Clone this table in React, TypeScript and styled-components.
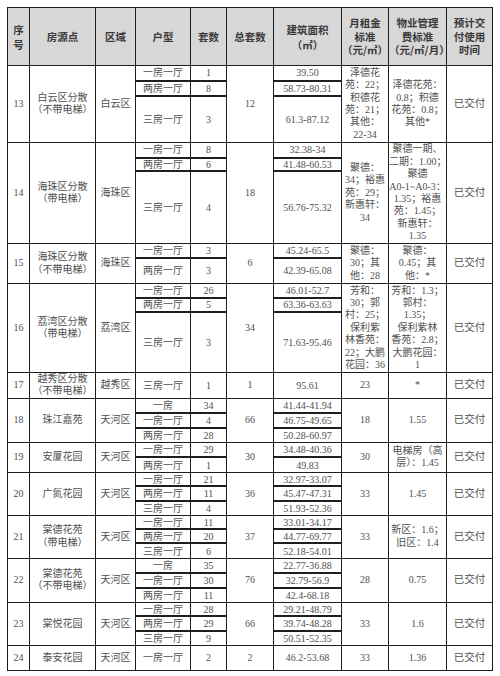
import styled, { createGlobalStyle } from "styled-components";

const GlobalStyle = createGlobalStyle`
  html, body {
    margin: 0;
    padding: 0;
    background: #ffffff;
  }
`;

const Page = styled.div`
  width: 500px;
  height: 676px;
  padding: 7px 0 0 7px;
  box-sizing: border-box;
  background: #fff;
`;

const Table = styled.table`
  border-collapse: collapse;
  table-layout: fixed;
  width: 485px;
  font-family: "Liberation Serif", "Noto Sans CJK SC", serif;
  font-size: 10px;
  color: #505050;
`;

const Head = styled.th<{ $lh: number }>`
  background: #d7d7d7;
  border: 1px solid #1e1e1e;
  height: 57px;
  padding: 0;
  font-family: "Noto Sans CJK SC", "Liberation Sans", sans-serif;
  font-weight: 700;
  font-size: 10.5px;
  line-height: ${(p) => p.$lh}px;
  color: #3a3a3a;
  text-align: center;
  vertical-align: middle;
`;

const Tr = styled.tr<{ $h: number }>`
  height: ${(p) => p.$h}px;
`;

const Cell = styled.td`
  border: 1px solid #1e1e1e;
  padding: 0;
  text-align: center;
  vertical-align: middle;
  white-space: nowrap;
  line-height: 12.4px;
`;

const SubCell = styled(Cell)<{ $split: boolean }>`
  border-top: ${(p) => (p.$split ? "2px solid #1e1e1e" : "1px solid #1e1e1e")};
  line-height: 11px;
`;

const Line = styled.div`
  white-space: nowrap;
`;

const Done = styled(Cell)`
  font-size: 10.5px;
`;

type Sub = { type: string; count: string; size: string; h: number };
type Row = {
  no: string;
  name: string[];
  area: string;
  subs: Sub[];
  total: string;
  rent: string[];
  fee: string[];
  time: string;
};

const widths = [22, 66, 40, 55, 36, 47, 68, 47, 58, 46];

const rows: Row[] = [
  {
    no: "13",
    name: ["白云区分散", "（不带电梯）"],
    area: "白云区",
    subs: [
      { type: "一房一厅", count: "1", size: "39.50", h: 15 },
      { type: "两房一厅", count: "8", size: "58.73-80.31", h: 15 },
      { type: "三房一厅", count: "3", size: "61.3-87.12", h: 47 },
    ],
    total: "12",
    rent: ["泽德花", "苑：22；", "积德花", "苑：21；", "其他：", "22-34"],
    fee: ["泽德花苑：", "0.8；积德", "花苑：0.8；", "其他*"],
    time: "已交付",
  },
  {
    no: "14",
    name: ["海珠区分散", "（带电梯）"],
    area: "海珠区",
    subs: [
      { type: "一房一厅", count: "8", size: "32.38-34", h: 15 },
      { type: "两房一厅", count: "6", size: "41.48-60.53", h: 12 },
      { type: "三房一厅", count: "4", size: "56.76-75.32", h: 73 },
    ],
    total: "18",
    rent: ["聚德：", "34；裕惠", "苑：29；", "新惠轩：", "34"],
    fee: [
      "聚德一期、",
      "二期：1.00；",
      "聚德",
      "A0-1~A0-3：",
      "1.35；裕惠",
      "苑：1.45；",
      "新惠轩：",
      "1.35",
    ],
    time: "已交付",
  },
  {
    no: "15",
    name: ["海珠区分散", "（不带电梯）"],
    area: "海珠区",
    subs: [
      { type: "一房一厅", count: "3", size: "45.24-65.5", h: 14 },
      { type: "两房一厅", count: "3", size: "42.39-65.08", h: 26 },
    ],
    total: "6",
    rent: ["聚德：", "30；其", "他：28"],
    fee: ["聚德：", "0.45；其", "他：*"],
    time: "已交付",
  },
  {
    no: "16",
    name: ["荔湾区分散", "（带电梯）"],
    area: "荔湾区",
    subs: [
      { type: "一房一厅", count: "26", size: "46.01-52.7", h: 14 },
      { type: "两房一厅", count: "5", size: "63.36-63.63", h: 14 },
      { type: "三房一厅", count: "3", size: "71.63-95.46", h: 61 },
    ],
    total: "34",
    rent: ["芳和：", "30；郭", "村：25；", "保利紫", "林香苑：", "22；大鹏", "花园：36"],
    fee: ["芳和：1.3；", "郭村：", "1.35；", "保利紫林", "香苑：2.8；", "大鹏花园：", "1"],
    time: "已交付",
  },
  {
    no: "17",
    name: ["越秀区分散", "（不带电梯）"],
    area: "越秀区",
    subs: [{ type: "三房一厅", count: "1", size: "95.61", h: 25 }],
    total: "1",
    rent: ["23"],
    fee: ["*"],
    time: "已交付",
  },
  {
    no: "18",
    name: ["珠江嘉苑"],
    area: "天河区",
    subs: [
      { type: "一房", count: "34", size: "41.44-41.94", h: 15 },
      { type: "一房一厅", count: "4", size: "46.75-49.65", h: 15 },
      { type: "两房一厅", count: "28", size: "50.28-60.97", h: 14 },
    ],
    total: "66",
    rent: ["18"],
    fee: ["1.55"],
    time: "已交付",
  },
  {
    no: "19",
    name: ["安厦花园"],
    area: "天河区",
    subs: [
      { type: "一房一厅", count: "29", size: "34.48-40.36", h: 15 },
      { type: "两房一厅", count: "1", size: "49.83", h: 15 },
    ],
    total: "30",
    rent: ["30"],
    fee: ["电梯房（高", "层）：1.45"],
    time: "已交付",
  },
  {
    no: "20",
    name: ["广氮花园"],
    area: "天河区",
    subs: [
      { type: "一房一厅", count: "21", size: "32.97-33.07", h: 14 },
      { type: "两房一厅", count: "11", size: "45.47-47.31", h: 15 },
      { type: "三房一厅", count: "4", size: "51.93-52.36", h: 14 },
    ],
    total: "36",
    rent: ["33"],
    fee: ["1.45"],
    time: "已交付",
  },
  {
    no: "21",
    name: ["棠德花苑", "（带电梯）"],
    area: "天河区",
    subs: [
      { type: "一房一厅", count: "11", size: "33.01-34.17", h: 14 },
      { type: "两房一厅", count: "20", size: "44.77-69.77", h: 14 },
      { type: "三房一厅", count: "6", size: "52.18-54.01", h: 15 },
    ],
    total: "37",
    rent: ["33"],
    fee: ["新区：1.6；", "旧区：1.4"],
    time: "已交付",
  },
  {
    no: "22",
    name: ["棠德花苑", "（不带电梯）"],
    area: "天河区",
    subs: [
      { type: "一房", count: "35", size: "22.77-36.88", h: 15 },
      { type: "一房一厅", count: "30", size: "32.79-56.9", h: 15 },
      { type: "两房一厅", count: "11", size: "42.4-68.18", h: 14 },
    ],
    total: "76",
    rent: ["28"],
    fee: ["0.75"],
    time: "已交付",
  },
  {
    no: "23",
    name: ["棠悦花园"],
    area: "天河区",
    subs: [
      { type: "一房一厅", count: "28", size: "29.21-48.79", h: 14 },
      { type: "两房一厅", count: "29", size: "39.74-48.28", h: 15 },
      { type: "三房一厅", count: "9", size: "50.51-52.35", h: 14 },
    ],
    total: "66",
    rent: ["33"],
    fee: ["1.6"],
    time: "已交付",
  },
  {
    no: "24",
    name: ["泰安花园"],
    area: "天河区",
    subs: [{ type: "一房一厅", count: "2", size: "46.2-53.68", h: 25 }],
    total: "2",
    rent: ["33"],
    fee: ["1.36"],
    time: "已交付",
  },
];

const headers: string[][] = [
  ["序", "号"],
  ["房源点"],
  ["区域"],
  ["户型"],
  ["套数"],
  ["总套数"],
  ["建筑面积", "（㎡）"],
  ["月租金", "标准", "（元/㎡）"],
  ["物业管理", "费标准", "（元/㎡/月）"],
  ["预计交", "付使用", "时间"],
];

function Lines({ items }: { items: string[] }) {
  return (
    <>
      {items.map((t, i) => (
        <Line key={i}>{t}</Line>
      ))}
    </>
  );
}

function App() {
  return (
    <Page>
      <GlobalStyle />
      <Table>
        <colgroup>
          {widths.map((w, i) => (
            <col key={i} style={{ width: w }} />
          ))}
        </colgroup>
        <thead>
          <tr>
            {headers.map((h, i) => (
              <Head key={i} $lh={h.length > 2 ? 13.5 : 15}>
                <Lines items={h} />
              </Head>
            ))}
          </tr>
        </thead>
        <tbody>
          {rows.map((row) => {
            const span = row.subs.length;
            return row.subs.map((s, i) => (
              <Tr key={`${row.no}-${i}`} $h={s.h}>
                {i === 0 && (
                  <>
                    <Cell rowSpan={span}>{row.no}</Cell>
                    <Cell rowSpan={span}>
                      <Lines items={row.name} />
                    </Cell>
                    <Cell rowSpan={span}>{row.area}</Cell>
                  </>
                )}
                <SubCell $split={i > 0}>{s.type}</SubCell>
                <SubCell $split={i > 0}>{s.count}</SubCell>
                {i === 0 && <Cell rowSpan={span}>{row.total}</Cell>}
                <SubCell $split={i > 0}>{s.size}</SubCell>
                {i === 0 && (
                  <>
                    <Cell rowSpan={span}>
                      <Lines items={row.rent} />
                    </Cell>
                    <Cell rowSpan={span}>
                      <Lines items={row.fee} />
                    </Cell>
                    <Done rowSpan={span}>{row.time}</Done>
                  </>
                )}
              </Tr>
            ));
          })}
        </tbody>
      </Table>
    </Page>
  );
}

export default App;
